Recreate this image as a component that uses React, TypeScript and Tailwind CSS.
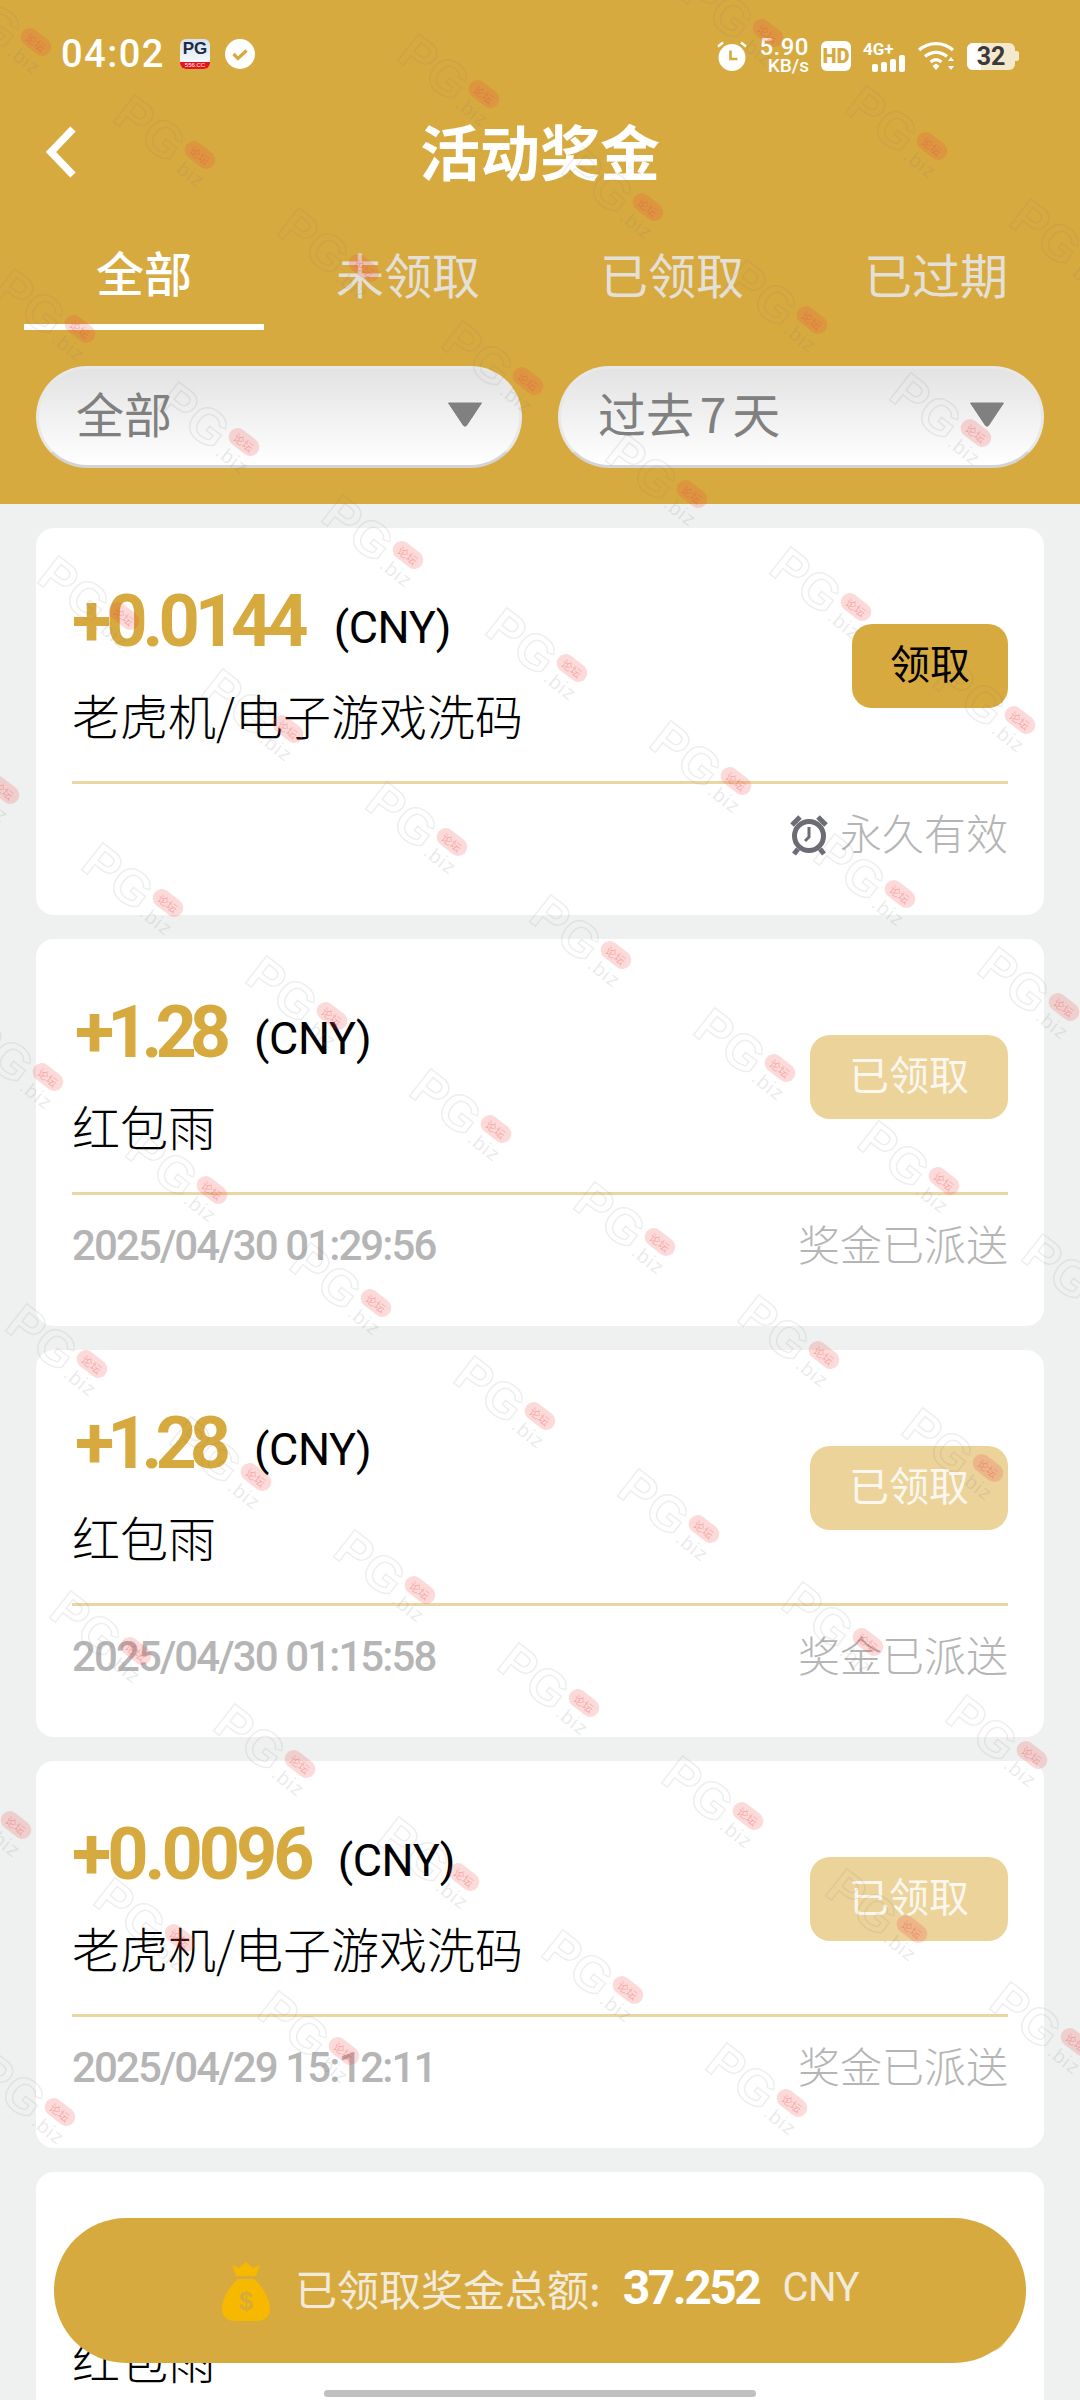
const cjk = 'font-["Noto_Sans_CJK_SC",sans-serif]'

const TABS = ['全部', '未领取', '已领取', '已过期']

const CARDS = [
  { amount: '+0.0144', track: 'tracking-[-5px] ml-0', unit: 'ml-[30px]', name: '老虎机/电子游戏洗码', status: 'open', footer: '永久有效' },
  { amount: '+1.28', track: 'tracking-[-7px] ml-[3px]', unit: 'ml-[30px]', name: '红包雨', status: 'done', date: '2025/04/30 01:29:56', footer: '奖金已派送' },
  { amount: '+1.28', track: 'tracking-[-7px] ml-[3px]', unit: 'ml-[30px]', name: '红包雨', status: 'done', date: '2025/04/30 01:15:58', footer: '奖金已派送' },
  { amount: '+0.0096', track: 'tracking-[-4px] ml-0', unit: 'ml-[27px]', name: '老虎机/电子游戏洗码', status: 'done', date: '2025/04/29 15:12:11', footer: '奖金已派送' },
  { amount: '+1.28', track: 'tracking-[-7px] ml-[3px]', unit: 'ml-[30px]', name: '红包雨', status: 'done', date: '2025/04/29 12:00:41', footer: '奖金已派送' },
]

// tiled watermark, lattice read off the screenshot
function marks() {
  const out: { x: number; y: number }[] = []
  for (let i = -6; i < 16; i++) {
    for (let j = -6; j < 16; j++) {
      const x = 200 + i * 164 - j * 120
      const y = 155 + i * 113 + j * 174
      if (x > -60 && x < 1140 && y > 0 && y < 2130) out.push({ x, y })
    }
  }
  return out
}

function Watermark({ x, y }: { x: number; y: number }) {
  return (
    <div className="absolute w-0 h-0 rotate-[38deg]" style={{ left: x, top: y }}>
      <span className='absolute left-[-92px] top-[-15px] font-["Liberation_Sans",sans-serif] font-bold text-[50px] leading-[50px] tracking-[1px] text-transparent [-webkit-text-stroke:1.5px_rgba(130,125,130,0.13)]'>
        PG
      </span>
      <span className='absolute left-[-16px] top-[11px] font-["Liberation_Sans",sans-serif] text-[20px] leading-[20px] tracking-[1px] text-[rgba(130,125,130,0.16)]'>
        .biz
      </span>
      <span className={`${cjk} absolute left-[-17px] top-[-9px] w-[34px] h-[18px] rounded-full bg-[rgba(238,70,70,0.2)] text-[11px] leading-[18px] text-center text-[rgba(238,70,70,0.35)]`}>
        论坛
      </span>
    </div>
  )
}

function StatusBar() {
  return (
    <div className="h-[108px] relative">
      <div className="flex items-center pt-[37px] pl-[61px] h-[71px]">
        <span className='font-["Roboto",sans-serif] font-medium text-[38px] leading-[34px] tracking-[1.5px] text-white w-[119px]'>
          04:02
        </span>
        <div className="relative w-[30px] h-[30px] rounded-[6px] overflow-hidden bg-gradient-to-b from-[#d5e2ef] to-[#ffffff] flex flex-col items-center">
          <span className='font-["Liberation_Sans",sans-serif] font-bold text-[17px] leading-[15px] mt-[2px] text-[#1d2a44]'>PG</span>
          <span className='absolute bottom-0 left-0 w-full h-[7px] bg-[#e8141c] font-["Liberation_Sans",sans-serif] text-[6px] leading-[7px] text-center text-white'>
            556.CC
          </span>
        </div>
        <svg width="30" height="30" viewBox="0 0 30 30" className="ml-[15px]">
          <circle cx="15" cy="15" r="15" fill="#fff" />
          <path d="M8.500 15l4.500 4.500 8.500-8" fill="none" stroke="#d7aa3f" strokeWidth="3.200" />
        </svg>
      </div>
      <div className="absolute left-[717px] top-[38px] flex items-center">
        <svg width="32" height="32" viewBox="0 0 32 32">
          <circle cx="15" cy="17.500" r="13.500" fill="#fff" />
          <path d="M1 6.500l5-4M29 6.500l-5-4" stroke="#fff" strokeWidth="2.400" />
          <path d="M13.500 10.500v8.500h7" fill="none" stroke="#d7aa3f" strokeWidth="2.600" />
        </svg>
        <div className='ml-[10px] w-[50px] flex flex-col items-end font-["Roboto",sans-serif] text-white'>
          <span className="font-medium text-[24px] leading-[19px] tracking-[0.5px]">5.90</span>
          <span className="font-medium text-[19px] leading-[17px]">KB/s</span>
        </div>
        <div className='ml-[12px] w-[30px] h-[30px] rounded-[6px] bg-white flex items-center justify-center font-["Roboto",sans-serif] font-black text-[20px] text-[#d7aa3f] leading-none'>
          HD
        </div>
        <div className="ml-[12px] w-[44px] h-[30px] relative">
          <span className='absolute left-0 top-[0px] font-["Roboto",sans-serif] font-bold text-[17px] leading-[16px] text-white'>4G+</span>
          <svg width="36" height="17" viewBox="0 0 36 17" className="absolute left-[9px] top-[14px]">
            <rect x="0" y="9" width="6" height="8" rx="2" fill="#fff" />
            <rect x="9" y="7" width="6" height="10" rx="2" fill="#fff" />
            <rect x="18" y="4" width="6" height="13" rx="2" fill="#fff" />
            <rect x="27" y="0" width="6" height="17" rx="2" fill="#fff" />
          </svg>
        </div>
        <svg width="38" height="30" viewBox="0 0 38 30" className="ml-[11px]">
          <path d="M1 9c10-8.500 24-8.500 34 0" fill="none" stroke="#fff" strokeWidth="3.400" />
          <path d="M7 15.500c6.500-5.500 15.500-5.500 22 0" fill="none" stroke="#fff" strokeWidth="3.400" />
          <path d="M12.500 21c3.500-3 7.500-3 11 0" fill="none" stroke="#fff" strokeWidth="3.200" />
          <path d="M14.500 25l3.500-2.500 3.500 2.500-3.500 4z" fill="#fff" />
          <path d="M33 16l3 4h-6zM33 29l3-4h-6z" fill="#fff" />
        </svg>
        <div className="ml-[11px] relative w-[48px] h-[27px] rounded-[6px] overflow-hidden bg-[#f4e8cd] flex items-center justify-center">
          <span className="absolute left-0 top-0 h-full w-[14px] bg-white" />
          <span className='relative font-["Roboto",sans-serif] font-bold text-[25px] leading-none text-[#3a3a3a]'>32</span>
        </div>
        <span className="w-[4px] h-[10px] bg-[#f4e8cd] rounded-r-[2px]" />
      </div>
    </div>
  )
}

function Select({ label }: { label: string }) {
  return (
    <div className="flex-1 h-[102px] rounded-full border-[3px] border-[#e8e8e8] border-b-[#d4d4d4] bg-gradient-to-b from-[#e3e3e3] to-[#ffffff] flex items-center justify-between pl-[37px] pr-[36px]">
      <span className={`${cjk} text-[48px] leading-[60px] text-[#808080] mt-[-11px] [word-spacing:-5px]`}>{label}</span>
      <svg width="36" height="25" viewBox="0 0 36 25" className="mt-[-6px]">
        <path d="M1.500 1h33L19.500 23.500q-1.500 1.500-3 0z" fill="#808080" stroke="#808080" strokeWidth="1" strokeLinejoin="round" />
      </svg>
    </div>
  )
}

function BonusCard({ amount, track, unit, name, status, date, footer }: (typeof CARDS)[number]) {
  return (
    <div className="bg-white rounded-[18px] h-[387px] px-9 shrink-0">
      <div className="h-[253px] flex justify-between items-start">
        <div className="pt-[46px]">
          <div className="h-[84px] flex items-end">
            <span className={`font-["Roboto",sans-serif] font-bold text-[72px] leading-[84px] text-[#d7aa3f] mb-[-6px] ${track}`}>
              {amount}
            </span>
            <span className={`font-["Roboto",sans-serif] text-[45px] leading-[60px] text-black tracking-[-0.4px] ${unit}`}>
              (CNY)
            </span>
          </div>
          <div className={`${cjk} font-light text-[48px] leading-[66px] text-black mt-[23px]`}>{name}</div>
        </div>
        {status === 'open' ? (
          <div className={`${cjk} mt-[96px] h-[84px] px-[38px] rounded-[20px] bg-[#d7aa3f] text-black text-[40px] leading-[76px]`}>领取</div>
        ) : (
          <div className={`${cjk} mt-[96px] h-[84px] px-[39px] rounded-[20px] bg-[#ebd39a] text-[#fbf7ee] text-[40px] leading-[76px]`}>已领取</div>
        )}
      </div>
      <div className="h-[3px] bg-[#ebd6a3]" />
      <div className="h-[102px] flex items-center justify-between">
        <span className='font-["Roboto",sans-serif] font-medium text-[42px] leading-[50px] text-[#b5b5b5] tracking-[-1.900px]'>
          {date}
        </span>
        <span className="flex items-center">
          {status === 'open' && (
            <svg width="40" height="42" viewBox="0 0 40 42" className="mr-[11px]">
              <circle cx="20" cy="22" r="14.500" fill="none" stroke="#6c6c74" strokeWidth="5" />
              <path d="M20 13v10l-4 4" fill="none" stroke="#6c6c74" strokeWidth="3" />
              <path d="M3 11l8-8M37 11l-8-8M9 35l-4 5M31 35l4 5" stroke="#6c6c74" strokeWidth="5" />
            </svg>
          )}
          <span className={`${cjk} font-light text-[42px] leading-[50px] text-[#b5b5b5] mt-[-6px]`}>{footer}</span>
        </span>
      </div>
    </div>
  )
}

export default function App() {
  return (
    <div className="relative w-[1080px] h-[2400px] overflow-hidden bg-[#eff1f0]">
      <div className="bg-[#d7aa3f] h-[504px]">
        <StatusBar />
        <div className="relative h-[90px] flex items-center justify-center">
          <svg width="34" height="52" viewBox="0 0 34 52" className="absolute left-[44px] top-[18px]">
            <path d="M29 3L7 26l22 23" fill="none" stroke="#fff" strokeWidth="7.500" />
          </svg>
          <h1 className={`${cjk} font-bold text-[60px] leading-[90px] text-white mt-[-6px]`}>活动奖金</h1>
        </div>
        <div className="flex px-3">
          {TABS.map((tab, i) => (
            <div key={tab} className="flex-1 h-[135px] relative flex justify-center">
              <span
                className={
                  i === 0
                    ? `${cjk} font-medium text-[48px] leading-[70px] text-white mt-[38px]`
                    : `${cjk} text-[48px] leading-[70px] text-[#e4e0d8] mt-[40px]`
                }
              >
                {tab}
              </span>
              {i === 0 && <span className="absolute left-3 right-3 top-[126px] h-[6px] bg-white" />}
            </div>
          ))}
        </div>
        <div className="flex gap-9 px-9 mt-[33px]">
          <Select label="全部" />
          <Select label="过去 7 天" />
        </div>
      </div>
      <div className="flex flex-col gap-6 px-9 pt-6">
        {CARDS.map((card, i) => (
          <BonusCard key={i} {...card} />
        ))}
      </div>
      {marks().map((m) => (
        <Watermark key={`${m.x}-${m.y}`} x={m.x} y={m.y} />
      ))}
      <div className="absolute left-[54px] top-[2218px] w-[972px] h-[145px] rounded-[72px] bg-[#d7aa3f] flex items-center justify-center">
        <svg width="50" height="62" viewBox="0 0 50 62" className="mr-[24px]">
          <path d="M11 5l7 3 7-6 7 6 7-3-4 11H15z" fill="#f6b900" />
          <path d="M17 19h16c9 8 16 20 16 30 0 8-6 12-13 12H14C7 61 1 57 1 49c0-10 7-22 16-30z" fill="#f6b900" />
          <text x="25" y="50" textAnchor="middle" fontFamily="Liberation Sans" fontWeight="700" fontSize="25" fill="#d7aa3f">$</text>
        </svg>
        <div className="flex items-center mt-[-5px]">
          <span className={`${cjk} text-[42px] leading-[60px] text-[#f2ebdc]`}>已领取奖金总额:</span>
          <span className='font-["Roboto",sans-serif] font-bold text-[48px] leading-[60px] text-white ml-[22px] tracking-[-2.500px]'>37.252</span>
          <span className='font-["Roboto",sans-serif] text-[40px] leading-[60px] text-[#f2ebdc] ml-[23px] tracking-[-0.5px]'>CNY</span>
        </div>
      </div>
      <div className="absolute left-[324px] top-[2390px] w-[432px] h-[7px] rounded-full bg-[#c0c0c0]" />
    </div>
  )
}
